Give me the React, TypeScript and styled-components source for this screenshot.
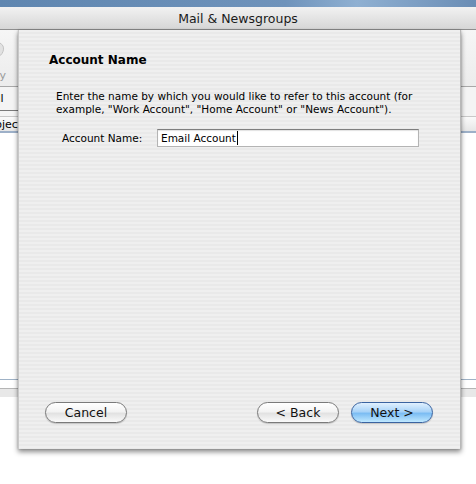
import React from "react";
import styled, { createGlobalStyle } from "styled-components";

const GlobalStyle = createGlobalStyle`
  html, body {
    margin: 0;
    padding: 0;
    background: #ffffff;
    overflow: hidden;
  }
  * {
    box-sizing: border-box;
  }
`;

const Screen = styled.div`
  position: relative;
  width: 476px;
  height: 484px;
  overflow: hidden;
  background: #ffffff;
  font-family: "DejaVu Sans", "Liberation Sans", sans-serif;
  color: #000;
`;

const DesktopStrip = styled.div`
  height: 7px;
  background: linear-gradient(90deg, #5f86b0 0%, #6f93bb 60%, #8fb0d2 75%, #6a8db5 100%);
`;

const TitleBar = styled.div`
  height: 23px;
  display: flex;
  align-items: center;
  justify-content: center;
  background: linear-gradient(#f2f2f2, #d6d6d6);
  border-bottom: 1px solid #8e8e8e;
  font-size: 12.5px;
  color: #1a1a1a;
`;

const Toolbar = styled.div`
  height: 57px;
  display: flex;
  align-items: flex-start;
  background: linear-gradient(#f6f6f6, #ececec);
  border-bottom: 1px solid #a8a8a8;
`;

const ToolItem = styled.div`
  margin-left: -27px;
  width: 33px;
  padding-top: 10px;
  display: flex;
  flex-direction: column;
  align-items: flex-end;
  gap: 9px;
  font-size: 11px;
  line-height: 13px;
  color: #9a9a9a;
`;

const SearchRow = styled.div`
  height: 30px;
  display: flex;
  align-items: flex-start;
  background: #f4f4f4;
  border-bottom: 1px solid #c8c8c8;
`;

const ScopeBox = styled.div`
  width: 40px;
  height: 24px;
  margin-left: -22px;
  padding: 5px 0 0 12px;
  border-bottom: 1px solid #7a7a7a;
  font-size: 11px;
  white-space: nowrap;
`;

const ColumnHeader = styled.div`
  height: 16px;
  display: flex;
  align-items: center;
  background: linear-gradient(#fafafa, #e6e6e6);
  border-bottom: 2px solid #9db0c8;
  font-size: 11px;
  white-space: nowrap;
`;

const HeaderText = styled.span`
  margin-left: -19px;
`;

const MessageList = styled.div`
  height: 247px;
  background: #ffffff;
  border-bottom: 1px solid #9fb2c6;
`;

const PreviewGap = styled.div`
  height: 9px;
  background: #ffffff;
  border-bottom: 1px solid #b5b5b5;
`;

const PreviewHeader = styled.div`
  height: 8px;
  background: #e8e8e8;
`;

const Sheet = styled.div`
  position: absolute;
  left: 18px;
  top: 30px;
  width: 443px;
  height: 419px;
  display: flex;
  flex-direction: column;
  padding: 22px 27px 26px 26px;
  background: repeating-linear-gradient(#efefef 0px, #efefef 2px, #e9e9e9 2px, #e9e9e9 4px);
  border-left: 1px solid #c8c8c8;
  border-right: 1px solid #b8b8b8;
  box-shadow: 0 3px 5px rgba(0, 0, 0, 0.45), 0 0 2px rgba(0, 0, 0, 0.2);
`;

const Heading = styled.h2`
  margin: 0 0 0 4px;
  font-size: 12px;
  font-weight: bold;
  line-height: 16px;
`;

const Description = styled.p`
  margin: 22px 0 0 11px;
  font-size: 10.5px;
  line-height: 13px;
  width: 372px;
`;

const FieldRow = styled.div`
  display: flex;
  align-items: center;
  margin: 13px 0 0 17px;
  gap: 14px;
`;

const FieldLabel = styled.label`
  font-size: 10.5px;
  width: 81px;
  white-space: nowrap;
`;

const TextField = styled.div`
  width: 262px;
  height: 18px;
  display: flex;
  align-items: center;
  padding-left: 3px;
  background: #ffffff;
  border: 1px solid #b4b4b4;
  border-top-color: #7e7e7e;
  box-shadow: inset 0 1px 1px rgba(0, 0, 0, 0.12);
  font-size: 10.5px;
`;

const Caret = styled.span`
  width: 1px;
  height: 14px;
  margin-left: 1px;
  background: #000;
`;

const Spacer = styled.div`
  flex: 1;
`;

const ButtonRow = styled.div`
  display: flex;
  align-items: center;
`;

const PillButton = styled.button<{ $primary?: boolean }>`
  width: 82px;
  height: 21px;
  padding: 0 0 1px;
  border-radius: 11px;
  font-family: "DejaVu Sans", "Liberation Sans", sans-serif;
  font-size: 12.5px;
  color: #111;
  border: 1px solid ${(p) => (p.$primary ? "#3a63a0" : "#7a7a7a")};
  background: ${(p) =>
    p.$primary
      ? "linear-gradient(#e0f0fe 0%, #a9d3f8 45%, #7cbdf3 55%, #bfe8ff 100%)"
      : "linear-gradient(#ffffff 0%, #f3f3f3 45%, #e2e2e2 55%, #fafafa 100%)"};
  box-shadow: 0 1px 1px rgba(0, 0, 0, 0.18);
  & + & {
    margin-left: 12px;
  }
`;

const ToolIcon = () => (
  <svg width="22" height="20" viewBox="0 0 22 20">
    <path d="M3 4 C8 0 16 1 19 6 C21 11 17 17 11 18 C6 18 2 14 3 9 Z" fill="#e2e2e2" stroke="#c4c4c4" />
    <path d="M9 7 L15 7 M9 11 L16 11" stroke="#bdbdbd" strokeWidth="1.5" />
  </svg>
);

export default function App() {
  return (
    <Screen>
      <GlobalStyle />
      <DesktopStrip />
      <TitleBar>Mail &amp; Newsgroups</TitleBar>
      <Toolbar>
        <ToolItem>
          <ToolIcon />
          <span>Reply</span>
        </ToolItem>
      </Toolbar>
      <SearchRow>
        <ScopeBox>All</ScopeBox>
      </SearchRow>
      <ColumnHeader>
        <HeaderText>Subject</HeaderText>
      </ColumnHeader>
      <MessageList />
      <PreviewGap />
      <PreviewHeader />

      <Sheet>
        <Heading>Account Name</Heading>
        <Description>
          Enter the name by which you would like to refer to this account (for example, "Work
          Account", "Home Account" or "News Account").
        </Description>
        <FieldRow>
          <FieldLabel>Account Name:</FieldLabel>
          <TextField>
            Email Account
            <Caret />
          </TextField>
        </FieldRow>
        <Spacer />
        <ButtonRow>
          <PillButton>Cancel</PillButton>
          <Spacer />
          <PillButton>&lt; Back</PillButton>
          <PillButton $primary>Next &gt;</PillButton>
        </ButtonRow>
      </Sheet>
    </Screen>
  );
}
